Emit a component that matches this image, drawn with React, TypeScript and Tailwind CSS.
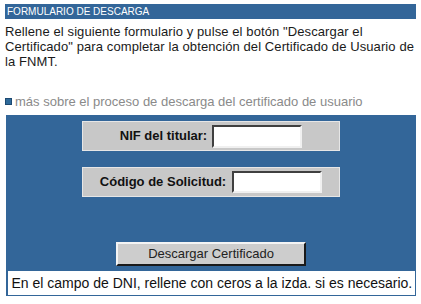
export default function App() {
  return (
    <div
      className="w-[421px] h-[304px] bg-white overflow-hidden"
      style={{ fontFamily: '"Liberation Sans", Arial, sans-serif' }}
    >
      {/* cabecera */}
      <div className="mt-[4px] ml-[5px] w-[411px] h-[15px] bg-[#336699] text-white text-[10px] leading-[15px] pl-[2px] uppercase">
        Formulario de descarga
      </div>

      <p className="mt-[5px] ml-[5px] text-[13px] leading-[15px] tracking-[0.1px] text-[#1a1a1a] whitespace-nowrap">
        Rellene el siguiente formulario y pulse el botón "Descargar el
        <br />
        Certificado" para completar la obtención del Certificado de Usuario de
        <br />
        la FNMT.
      </p>

      <div className="mt-[25px] ml-[5px] flex items-center gap-[3px] text-[13px] leading-[15px] text-[#8a8a8a]">
        <span className="w-[7px] h-[7px] bg-[#2f6a9a] border border-[#1d4a72]"></span>
        <span>más sobre el proceso de descarga del certificado de usuario</span>
      </div>

      {/* formulario */}
      <div className="mt-[6px] ml-[6px] w-[410px] h-[181px] bg-[#336699] flex flex-col items-center pt-[6px]">
        <div className="w-[258px] h-[30px] bg-[#c8c8c8] border border-[#e6e6e6] flex items-center justify-center gap-[5px]">
          <span className="text-[13px] font-bold text-[#111]">NIF del titular:</span>
          <input
            type="text"
            className="w-[90px] h-[23px] bg-white border-2 border-t-[#404040] border-l-[#404040] border-b-[#f0f0f0] border-r-[#f0f0f0] outline-none"
          />
        </div>

        <div className="mt-[16px] w-[258px] h-[30px] bg-[#c8c8c8] border border-[#e6e6e6] flex items-center justify-center gap-[6px]">
          <span className="text-[13px] font-bold text-[#111]">Código de Solicitud:</span>
          <input
            type="text"
            className="w-[90px] h-[22px] bg-white border-2 border-t-[#404040] border-l-[#404040] border-b-[#f0f0f0] border-r-[#f0f0f0] outline-none"
          />
        </div>

        <button className="mt-[45px] w-[190px] h-[24px] bg-[#cdcdcd] border-2 border-t-[#f4f4f4] border-l-[#f4f4f4] border-b-[#1a1a1a] border-r-[#1a1a1a] text-[13px] text-[#222]">
          Descargar Certificado
        </button>

        <div className="mt-[5px] w-[407px] h-[24px] bg-white text-[14px] leading-[24px] text-[#111] pl-[4px] whitespace-nowrap">
          En el campo de DNI, rellene con ceros a la izda. si es necesario.
        </div>
      </div>
    </div>
  );
}
